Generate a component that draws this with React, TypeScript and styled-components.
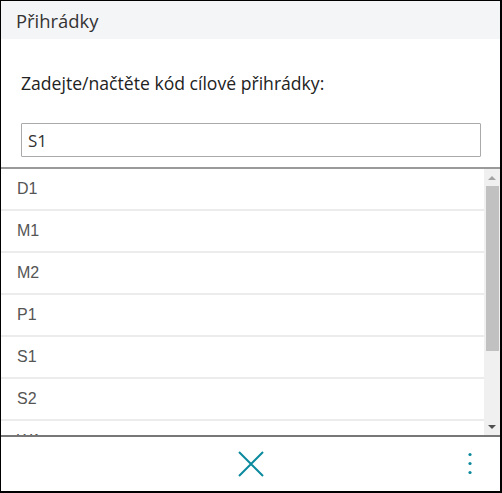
import React, { useState } from "react";
import styled, { createGlobalStyle } from "styled-components";

const GlobalStyle = createGlobalStyle`
  html, body {
    margin: 0;
    padding: 0;
    background: #ffffff;
  }
`;

const Frame = styled.div`
  box-sizing: border-box;
  width: 502px;
  height: 493px;
  display: flex;
  flex-direction: column;
  border-top: 1px solid #000;
  border-left: 1px solid #000;
  border-right: 2px solid #000;
  border-bottom: 2px solid #000;
  background: #fff;
  font-family: "Open Sans", "Noto Sans", sans-serif;
  overflow: hidden;
`;

const Header = styled.header`
  height: 38px;
  display: flex;
  align-items: center;
  padding-left: 15px;
  background: #f4f5f7;
  color: #333;
  font-size: 18.4px;
`;

const Prompt = styled.div`
  padding: 32px 0 0 20px;
  height: 31px;
  color: #222;
  font-size: 17.6px;
`;

const InputWrap = styled.div`
  padding: 21px 19px 10px 20px;
  border-bottom: 2px solid #9a9a9a;
`;

const CodeInput = styled.input`
  box-sizing: border-box;
  width: 100%;
  height: 34px;
  border: 1px solid #aaa;
  border-radius: 1px;
  padding: 0 6px;
  font-family: "Open Sans", "Noto Sans", sans-serif;
  font-size: 17px;
  color: #333;
  outline: none;
`;

const ListArea = styled.div`
  flex: 1;
  min-height: 0;
  display: flex;
`;

const List = styled.ul`
  flex: 1;
  margin: 0;
  padding: 0;
  list-style: none;
  overflow: hidden;
`;

const Row = styled.li`
  box-sizing: border-box;
  height: 42px;
  display: flex;
  align-items: center;
  padding-left: 16px;
  border-bottom: 2px solid #ececec;
  color: #555;
  font-family: "Liberation Sans", Arial, sans-serif;
  font-size: 16px;
`;

const ScrollTrack = styled.div`
  width: 16px;
  display: flex;
  flex-direction: column;
  background: #f0f0f0;
`;

const ScrollButton = styled.div`
  height: 17px;
  display: flex;
  align-items: center;
  justify-content: center;
`;

const ScrollRail = styled.div`
  flex: 1;
  display: flex;
  flex-direction: column;
`;

const Thumb = styled.div<{ $size: number }>`
  height: ${(p) => p.$size}%;
  margin: 0 1px 0 2px;
  background: #c1c1c1;
`;

const Arrow = styled.span<{ $down?: boolean; $color: string }>`
  width: 0;
  height: 0;
  border-left: 4px solid transparent;
  border-right: 4px solid transparent;
  ${(p) =>
    p.$down
      ? `border-top: 4px solid ${p.$color};`
      : `border-bottom: 4px solid ${p.$color};`}
`;

const Footer = styled.footer`
  height: 54px;
  display: grid;
  grid-template-columns: 1fr auto 1fr;
  align-items: center;
  border-top: 2px solid #777;
`;

const IconButton = styled.button<{ $align?: string; $inset?: number }>`
  justify-self: ${(p) => p.$align || "center"};
  margin: 0 ${(p) => p.$inset || 0}px 0 0;
  background: none;
  border: none;
  padding: 0;
  display: flex;
  cursor: pointer;
`;

const bins = ["D1", "M1", "M2", "P1", "S1", "S2", "W1"];

function CloseIcon() {
  return (
    <svg width="26" height="26" viewBox="0 0 26 26">
      <path d="M1 1 L25 25 M25 1 L1 25" stroke="#0a8a9c" strokeWidth="2" fill="none" />
    </svg>
  );
}

function MoreIcon() {
  return (
    <svg width="6" height="24" viewBox="0 0 6 24">
      <circle cx="3" cy="2.5" r="1.6" fill="#0a8a9c" />
      <circle cx="3" cy="11.5" r="1.6" fill="#0a8a9c" />
      <circle cx="3" cy="20.5" r="1.6" fill="#0a8a9c" />
    </svg>
  );
}

export default function App() {
  const [code, setCode] = useState("S1");

  return (
    <>
      <GlobalStyle />
      <Frame>
        <Header>Přihrádky</Header>
        <Prompt>Zadejte/načtěte kód cílové přihrádky:</Prompt>
        <InputWrap>
          <CodeInput value={code} onChange={(e) => setCode(e.target.value)} />
        </InputWrap>
        <ListArea>
          <List>
            {bins.map((b) => (
              <Row key={b}>{b}</Row>
            ))}
          </List>
          <ScrollTrack>
            <ScrollButton>
              <Arrow $color="#a3a3a3" />
            </ScrollButton>
            <ScrollRail>
              <Thumb $size={71} />
            </ScrollRail>
            <ScrollButton>
              <Arrow $down $color="#505050" />
            </ScrollButton>
          </ScrollTrack>
        </ListArea>
        <Footer>
          <span />
          <IconButton>
            <CloseIcon />
          </IconButton>
          <IconButton $align="end" $inset={27}>
            <MoreIcon />
          </IconButton>
        </Footer>
      </Frame>
    </>
  );
}
